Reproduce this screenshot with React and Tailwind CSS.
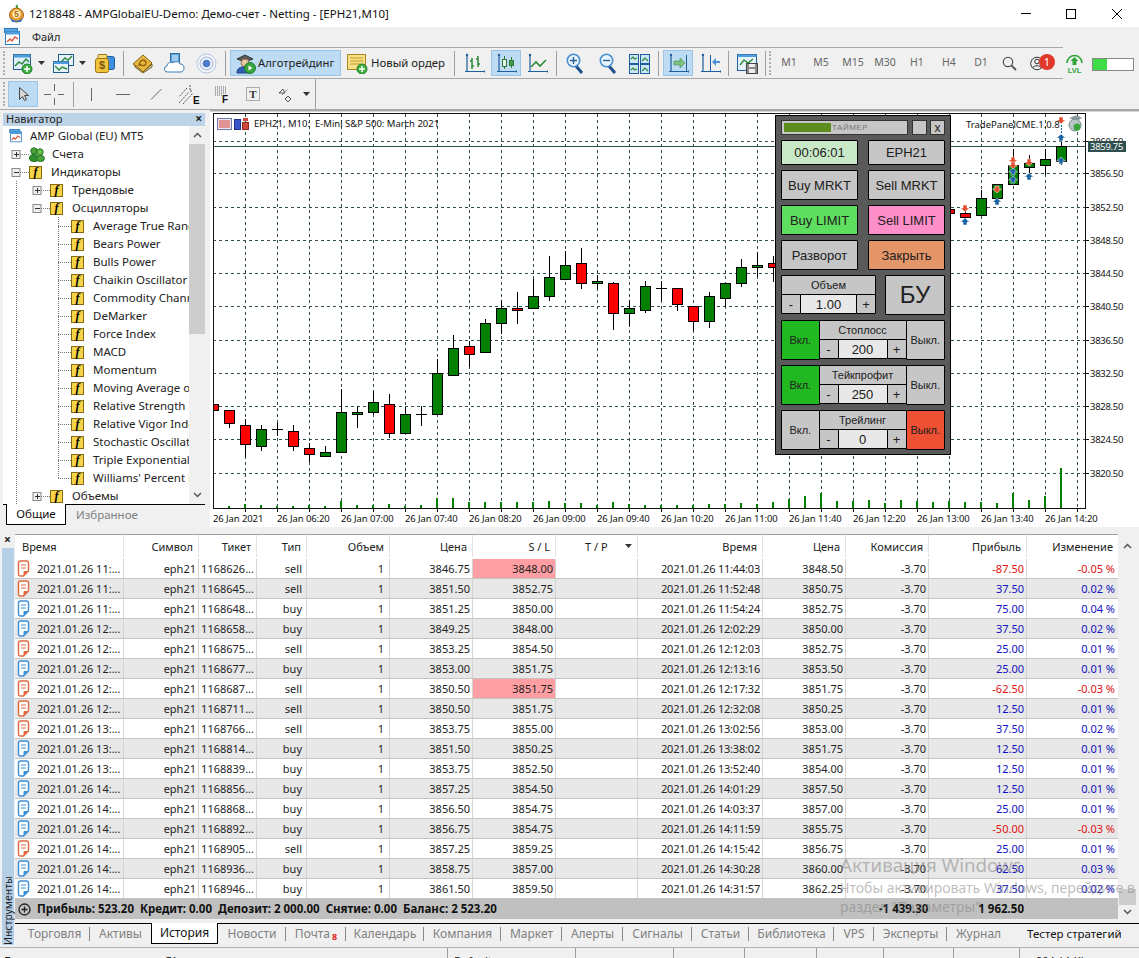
import React from 'react';

const candles = [
  [213, 404, 404, 410, 410, 'r'], [229, 410, 410, 423, 428, 'r'], [245, 419, 425, 444, 457, 'r'], [261, 425, 429, 446, 451, 'g'],
  [277, 423, 429, 429, 436, 'd'], [293, 425, 431, 446, 451, 'r'], [309, 443, 448, 454, 462, 'r'], [325, 446, 452, 456, 457, 'g'],
  [341, 389, 412, 452, 453, 'g'], [357, 406, 412, 414, 428, 'g'], [373, 391, 402, 412, 415, 'g'], [389, 394, 404, 433, 438, 'r'],
  [405, 407, 414, 433, 433, 'g'], [421, 406, 414, 414, 426, 'd'], [437, 359, 373, 414, 414, 'g'], [453, 335, 348, 375, 375, 'g'],
  [469, 341, 346, 354, 367, 'r'], [485, 319, 323, 352, 352, 'g'], [501, 300, 308, 323, 334, 'g'], [517, 292, 308, 310, 324, 'r'],
  [533, 279, 296, 308, 308, 'g'], [549, 256, 277, 296, 301, 'g'], [565, 251, 265, 279, 279, 'g'], [581, 248, 263, 283, 289, 'r'],
  [597, 275, 281, 283, 289, 'g'], [613, 282, 283, 313, 330, 'r'], [629, 300, 308, 313, 326, 'g'], [645, 281, 286, 310, 313, 'g'],
  [661, 281, 288, 288, 301, 'd'], [677, 288, 288, 304, 311, 'r'], [693, 306, 306, 321, 331, 'r'], [709, 292, 296, 321, 328, 'g'],
  [725, 283, 283, 298, 307, 'g'], [741, 259, 267, 283, 287, 'g'], [757, 252, 265, 267, 277, 'g'], [773, 256, 263, 267, 282, 'r'],
  [949, 205, 209, 213, 216, 'r'], [965, 206, 213, 217, 224, 'r'], [981, 190, 198, 215, 216, 'g'], [997, 184, 184, 198, 204, 'g'],
  [1013, 149, 165, 184, 184, 'g'], [1029, 155, 163, 167, 180, 'g'], [1045, 149, 159, 165, 175, 'g'], [1061, 142, 146, 161, 165, 'g'],
];

const volumes = [2, 4, 3, 2, 2, 3, 2, 7, 3, 3, 4, 2, 3, 10, 10, 6, 6, 6, 6, 6, 7, 5, 5, 3, 6, 4, 3, 3, 3, 3, 4, 4, 5, 4, 6, 9, 12, 15, 7, 7, 8, 5, 8, 7, 6, 7, 6, 6, 5, 15, 8, 12, 40];
const hLines = [141, 173, 207, 240, 273, 306, 340, 373, 406, 439, 473];
const prices = ['3860.50', '3856.50', '3852.50', '3848.50', '3844.50', '3840.50', '3836.50', '3832.50', '3828.50', '3824.50', '3820.50'];
const timeLabels = ['26 Jan 2021', '26 Jan 06:20', '26 Jan 07:00', '26 Jan 07:40', '26 Jan 08:20', '26 Jan 09:00', '26 Jan 09:40', '26 Jan 10:20', '26 Jan 11:00', '26 Jan 11:40', '26 Jan 12:20', '26 Jan 13:00', '26 Jan 13:40', '26 Jan 14:20'];

const rows = [
  ['11', '1168626', 'sell', '3846.75', '3848.00', '11:44:03', '3848.50', '-87.50', '-0.05 %', true],
  ['11', '1168645', 'sell', '3851.50', '3852.75', '11:52:48', '3850.75', '37.50', '0.02 %'],
  ['11', '1168648', 'buy', '3851.25', '3850.00', '11:54:24', '3852.75', '75.00', '0.04 %'],
  ['12', '1168658', 'buy', '3849.25', '3848.00', '12:02:29', '3850.00', '37.50', '0.02 %'],
  ['12', '1168675', 'sell', '3853.25', '3854.50', '12:12:03', '3852.75', '25.00', '0.01 %'],
  ['12', '1168677', 'buy', '3853.00', '3851.75', '12:13:16', '3853.50', '25.00', '0.01 %'],
  ['12', '1168687', 'sell', '3850.50', '3851.75', '12:17:32', '3851.75', '-62.50', '-0.03 %', true],
  ['12', '1168711', 'sell', '3850.50', '3851.75', '12:32:08', '3850.25', '12.50', '0.01 %'],
  ['13', '1168766', 'sell', '3853.75', '3855.00', '13:02:56', '3853.00', '37.50', '0.02 %'],
  ['13', '1168814', 'buy', '3851.50', '3850.25', '13:38:02', '3851.75', '12.50', '0.01 %'],
  ['13', '1168839', 'buy', '3853.75', '3852.50', '13:52:40', '3854.00', '12.50', '0.01 %'],
  ['14', '1168856', 'buy', '3857.25', '3854.50', '14:01:29', '3857.50', '12.50', '0.01 %'],
  ['14', '1168868', 'buy', '3856.50', '3854.75', '14:03:37', '3857.00', '25.00', '0.01 %'],
  ['14', '1168892', 'buy', '3856.75', '3854.75', '14:11:59', '3855.75', '-50.00', '-0.03 %'],
  ['14', '1168905', 'sell', '3857.25', '3859.25', '14:15:42', '3856.75', '25.00', '0.01 %'],
  ['14', '1168936', 'buy', '3858.75', '3857.00', '14:30:28', '3860.00', '62.50', '0.03 %'],
  ['14', '1168946', 'buy', '3861.50', '3859.50', '14:31:57', '3862.25', '37.50', '0.02 %'],
];

const tabs = [
  { label: 'Торговля', w: 'w-[75px]' }, { label: 'Активы', w: 'w-[61px]' }, { label: 'История', w: 'w-[67px]', active: true },
  { label: 'Новости', w: 'w-[68px]' }, { label: 'Почта', w: 'w-[60px]', badge: '8' }, { label: 'Календарь', w: 'w-[78px]' },
  { label: 'Компания', w: 'w-[77px]' }, { label: 'Маркет', w: 'w-[61px]' }, { label: 'Алерты', w: 'w-[61px]' },
  { label: 'Сигналы', w: 'w-[69px]' }, { label: 'Статьи', w: 'w-[57px]' }, { label: 'Библиотека', w: 'w-[85px]' },
  { label: 'VPS', w: 'w-[40px]' }, { label: 'Эксперты', w: 'w-[73px]' }, { label: 'Журнал', w: 'w-[63px]', last: true },
];

const indicators = ['Average True Range', 'Bears Power', 'Bulls Power', 'Chaikin Oscillator', 'Commodity Channel', 'DeMarker', 'Force Index', 'MACD', 'Momentum', 'Moving Average of', 'Relative Strength Index', 'Relative Vigor Index', 'Stochastic Oscillator', 'Triple Exponential', "Williams' Percent Range"];

const tableCols = 'grid grid-cols-[109px_75px_58px_50px_83px_83px_83px_82px_125px_83px_83px_98px_91px]';

function Caret() {
  return (
    <svg width="7" height="4" viewBox="0 0 7 4" className="shrink-0">
      <path d="M0 0h7L3.5 4z" fill="#333" />
    </svg>
  );
}

function PlusBadge({ x = 13, y = 13 }) {
  return (
    <g>
      <circle cx={x} cy={y} r="5" fill="#3fae3f" stroke="#1f7f2f" />
      <path d={`M${x - 3} ${y}h6M${x} ${y - 3}v6`} stroke="#fff" strokeWidth="1.5" />
    </g>
  );
}

function Ico({ w = 21, h = 21, vb, className, children }) {
  return (
    <svg width={w} height={h} viewBox={vb || `0 0 ${w} ${h}`} className={`shrink-0 ${className || ''}`}>
      {children}
    </svg>
  );
}

function WinIcon({ w = 16, h = 18 }) {
  return (
    <Ico w={w} h={h} vb="0 0 16 18">
      <rect x="0.5" y="0.5" width="13" height="4" fill="#58a6e0" stroke="#2c7cc0" />
      <rect x="1.5" y="3.5" width="14" height="13" fill="#fff" stroke="#2c7cc0" />
      <rect x="1.5" y="3.5" width="14" height="3" fill="#4f9ddc" />
      <path d="M3 14l3-3 2 2 3-4 3 2" fill="none" stroke="#e0503c" strokeWidth="1.3" />
    </Ico>
  );
}

function Logo() {
  return (
    <Ico w={17} h={19}>
      <path d="M8.5 1c1 2 1 3 0 5" stroke="#2f9a3a" strokeWidth="2" fill="none" />
      <circle cx="8.5" cy="11" r="7" fill="#e89a2a" stroke="#a5681a" />
      <path d="M2 13c3 5 10 5 13 0l-2 5H4z" fill="#2f6fc0" />
      <circle cx="8.5" cy="10" r="4.2" fill="#fff3c0" />
      <text x="8.5" y="13" fontSize="9" fontWeight="700" textAnchor="middle" fill="#b56a10" fontFamily="Liberation Sans">5</text>
    </Ico>
  );
}

function NewChart() {
  return (
    <Ico>
      <rect x="1.5" y="1.5" width="17" height="15" fill="#dff0fb" stroke="#1d5e8c" />
      <rect x="1.5" y="1.5" width="17" height="3" fill="#4f9ddc" />
      <path d="M3 13l4-4 3 2 4-5 3 3" fill="none" stroke="#2f8a3a" strokeWidth="1.5" />
      <PlusBadge x={15} y={16} />
    </Ico>
  );
}

function Windows2() {
  return (
    <Ico>
      <rect x="5.5" y="1.5" width="15" height="11" fill="#e6f3fb" stroke="#1d5e8c" />
      <path d="M8 9l4-4 3 2 4-4" fill="none" stroke="#2f8a3a" strokeWidth="1.4" />
      <rect x="0.5" y="8.5" width="15" height="11" fill="#e6f3fb" stroke="#1d5e8c" />
      <rect x="0.5" y="8.5" width="15" height="2.5" fill="#4f9ddc" />
      <path d="M2 13l4 4 3-3 5 2" fill="none" stroke="#2f8a3a" strokeWidth="1.4" />
    </Ico>
  );
}

function Dollar() {
  return (
    <Ico>
      <rect x="10.5" y="3.5" width="10" height="13" rx="2" fill="#3f8fe0" stroke="#1d5e9c" />
      <rect x="1.5" y="5.5" width="13" height="14" rx="2" fill="#f2c43c" stroke="#9c7410" />
      <rect x="4" y="1.5" width="9" height="4" rx="1" fill="#f7dc7c" stroke="#9c7410" />
      <text x="8" y="16" fontSize="11" fontWeight="700" textAnchor="middle" fill="#7a5a10" fontFamily="Liberation Sans">$</text>
    </Ico>
  );
}

function Book() {
  return (
    <Ico>
      <path d="M1 11L11 2l9 8-9 9z" fill="#e8b83c" stroke="#80601a" />
      <path d="M3 12l8 7 9-8v3l-9 6-8-6z" fill="#c9c9b0" stroke="#80601a" />
      <path d="M8 9c2-3 6-2 6 1s-3 3-5 2M8 9l-1 3 3 0" fill="none" stroke="#8a5a10" strokeWidth="1.3" />
    </Ico>
  );
}

function CloudUser() {
  return (
    <Ico>
      <rect x="6.5" y="0.5" width="9" height="12" fill="#5aa5e0" stroke="#2c6ca0" />
      <path d="M8 3h6M8 5h6M8 7h6" stroke="#e8f4ff" />
      <path d="M4 19a3 3 0 0 1-1-6c0-3 4-5 6-3 2-2 6-2 7 1 3 0 4 2 4 4s-1 4-3 4z" fill="#fff" stroke="#3b7cb8" />
    </Ico>
  );
}

function Signal() {
  return (
    <Ico>
      <circle cx="10.5" cy="10.5" r="9.5" fill="#f4f6fb" stroke="#b4c4e0" />
      <circle cx="10.5" cy="10.5" r="6.5" fill="#e6ecf8" stroke="#a0b4da" />
      <circle cx="10.5" cy="10.5" r="3.2" fill="#4f7fd0" stroke="#3a64b0" />
    </Ico>
  );
}

function Algo() {
  return (
    <Ico>
      <path d="M2 6l8-4 8 4-8 3z" fill="#5a5a5a" stroke="#333" />
      <circle cx="10" cy="10" r="4" fill="#e8c8a0" stroke="#907050" />
      <path d="M2 20c0-5 3-6 8-6s6 1 6 6z" fill="#2f5fb0" stroke="#1f4080" />
      <circle cx="15" cy="15" r="5.5" fill="#3aa53a" stroke="#1f7f2f" />
      <path d="M13.5 12.5v5l4-2.5z" fill="#fff" />
    </Ico>
  );
}

function NewOrder() {
  return (
    <Ico>
      <rect x="0.5" y="1.5" width="18" height="15" fill="#f7e08a" stroke="#a8861c" />
      <path d="M3 5h13M3 8h13M3 11h10" stroke="#c49a20" />
      <PlusBadge x={15} y={16} />
    </Ico>
  );
}

function Axes({ children, w = 21, h = 21 }) {
  return (
    <Ico w={w} h={h}>
      <path d="M3 1v18M1 18.5h19" stroke="#1d5e9c" strokeWidth="1.2" fill="none" />
      <circle cx="3" cy="2" r="1.2" fill="#1d5e9c" />
      <path d="M20 17l0 3 1.5-1.5z" fill="#1d5e9c" />
      {children}
    </Ico>
  );
}

function Magnifier({ minus }) {
  return (
    <Ico w={18} h={21}>
      <path d="M10 13l6 7" stroke="#1d4e8c" strokeWidth="3" />
      <circle cx="7.5" cy="7.5" r="6.2" fill="#eaf4fc" stroke="#4a90d0" strokeWidth="1.6" />
      <path d={minus ? 'M4 7.5h7' : 'M4 7.5h7M7.5 4v7'} stroke="#2c5e8c" strokeWidth="1.4" />
    </Ico>
  );
}

function GridIcon() {
  return (
    <Ico>
      <rect x="0.5" y="1.5" width="9" height="9" fill="#cfe6f6" stroke="#1d5e9c" />
      <rect x="11.5" y="1.5" width="9" height="9" fill="#cfe6f6" stroke="#1d5e9c" />
      <rect x="0.5" y="11.5" width="9" height="9" fill="#cfe6f6" stroke="#1d5e9c" />
      <rect x="11.5" y="11.5" width="9" height="9" fill="#cfe6f6" stroke="#1d5e9c" />
      <path d="M2 6l2-2 2 2 2-1M13 8l3-3 3 3M2 17l2-2 2 2 2-1M13 18l3-3 3 3" fill="none" stroke="#2f8a3a" strokeWidth="1.2" />
    </Ico>
  );
}

function Template() {
  return (
    <Ico>
      <rect x="0.5" y="1.5" width="19" height="16" fill="#e6f3fb" stroke="#1d5e9c" />
      <rect x="0.5" y="1.5" width="19" height="2.5" fill="#4f9ddc" />
      <path d="M3 12l4-5 4 3 5-4" fill="none" stroke="#2f8a3a" strokeWidth="1.4" />
      <rect x="9.5" y="10.5" width="11" height="10" fill="#8a8a8a" stroke="#444" />
      <rect x="12" y="11" width="6" height="3" fill="#eee" />
      <rect x="12" y="16" width="6" height="4" fill="#eee" />
    </Ico>
  );
}

function Lvl() {
  return (
    <Ico w={19} h={21}>
      <path d="M2 10a7.5 7.5 0 0 1 15 0" fill="none" stroke="#2fa53a" strokeWidth="1.6" />
      <path d="M9.5 4l4 4h-2v4h-4V8h-2z" fill="#2fa53a" />
      <text x="9.5" y="20" fontSize="7.5" textAnchor="middle" fill="#2fa53a" fontFamily="Liberation Sans" fontWeight="700">LVL</text>
    </Ico>
  );
}

function FIcon() {
  return (
    <span className="w-[13px] h-[13px] shrink-0 border border-[#8a6a10] bg-[#f6d44a] flex items-center justify-center font-['Liberation_Serif'] italic font-bold text-[12px] leading-none text-black">f</span>
  );
}

function Accounts() {
  return (
    <Ico w={16} h={15}>
      <circle cx="5" cy="4" r="3.2" fill="#4aa53a" stroke="#1f6f1f" />
      <circle cx="11" cy="5" r="3.2" fill="#6ac04a" stroke="#1f6f1f" />
      <ellipse cx="5" cy="11" rx="4.5" ry="3.5" fill="#2f8f2f" stroke="#1f6f1f" />
      <ellipse cx="11.5" cy="11.5" rx="4" ry="3" fill="#4aa53a" stroke="#1f6f1f" />
    </Ico>
  );
}

function DocIcon({ sell }) {
  const c = sell ? '#e0693c' : '#3b8fd8';
  return (
    <Ico w={13} h={17} className="ml-[2px]">
      <path d="M1.5 3q0-2 2-2h6q2 0 2 2v8l-5 5h-3q-2 0-2-2z" fill="#fff" stroke={c} strokeWidth="1.4" />
      <path d="M11.5 11h-4q-1 0-1 1v4z" fill={c} />
      <path d="M4 5h5M4 8h5" stroke={c} strokeWidth="1.2" />
    </Ico>
  );
}

function TreeLines({ w, guides = [], box, branch, last }) {
  // dotted tree connectors of one navigator row
  return (
    <svg width={w} height="18" className="shrink-0">
      {guides.map((g) => (
        <path key={g} d={`M${g + 0.5} 0v18`} stroke="#777" strokeDasharray="1 1" />
      ))}
      {branch !== undefined && (
        <path d={`M${branch + 0.5} 0v${last ? 9 : 18}M${branch} 9.5h${w - branch}`} stroke="#777" strokeDasharray="1 1" />
      )}
      {box !== undefined && (
        <g>
          <path d={`M${box + 4} 9.5H${w}`} stroke="#777" strokeDasharray="1 1" />
          <rect x={box - 4} y="5.5" width="8" height="8" fill="#f0f0f0" stroke="#8a8a8a" />
          <path d={`M${box - 2} 9.5h5`} stroke="#333" />
        </g>
      )}
    </svg>
  );
}

function PlusLines({ w, guides, box }) {
  return (
    <svg width={w} height="18" className="shrink-0">
      {guides.map((g) => (
        <path key={g} d={`M${g + 0.5} 0v18`} stroke="#777" strokeDasharray="1 1" />
      ))}
      <path d={`M${box + 4} 9.5H${w}`} stroke="#777" strokeDasharray="1 1" />
      <rect x={box - 4} y="5.5" width="8" height="8" fill="#f0f0f0" stroke="#8a8a8a" />
      <path d={`M${box - 2} 9.5h5M${box + 0.5} 7v5`} stroke="#333" />
    </svg>
  );
}

function Navigator() {
  return (
    <div className="w-[210px] shrink-0 flex flex-col pl-[3px] pt-[3px] pr-[5px] pb-[2px] bg-[#f0f0f0]">
      <div className="h-[13px] bg-[#bcd3e8] flex items-start justify-between pl-[3px] pr-[3px] text-[11px] leading-[11px] text-[#222]">
        <span>Навигатор</span>
        <span className="font-bold text-[12px]">×</span>
      </div>
      <div className="relative bg-white flex-1 min-h-0 flex overflow-hidden">
        <div className="w-[186px] shrink-0 overflow-hidden text-[11.5px] text-[#222] whitespace-nowrap pl-[3px] pt-[1px]">
          <div className="h-[18px] flex items-center">
            <span className="ml-[2px]"><WinIcon w={15} h={14} /></span>
            <span className="ml-[7px]">AMP Global (EU) MT5</span>
          </div>
          <div className="h-[18px] flex items-center">
            <PlusLines w={23} guides={[]} box={10} />
            <Accounts />
            <span className="ml-[7px]">Счета</span>
          </div>
          <div className="h-[18px] flex items-center">
            <TreeLines w={23} box={10} />
            <FIcon />
            <span className="ml-[9px]">Индикаторы</span>
          </div>
          <div className="h-[18px] flex items-center">
            <PlusLines w={44} guides={[10]} box={31} />
            <FIcon />
            <span className="ml-[9px]">Трендовые</span>
          </div>
          <div className="h-[18px] flex items-center">
            <TreeLines w={44} guides={[10]} box={31} />
            <FIcon />
            <span className="ml-[9px]">Осцилляторы</span>
          </div>
          {indicators.map((name, i) => (
            <div key={name} className="h-[18px] flex items-center">
              <TreeLines w={65} guides={[10]} branch={52} last={i === indicators.length - 1} />
              <FIcon />
              <span className="ml-[9px]">{name}</span>
            </div>
          ))}
          <div className="h-[18px] flex items-center">
            <PlusLines w={44} guides={[10]} box={31} />
            <FIcon />
            <span className="ml-[9px]">Объемы</span>
          </div>
        </div>
        <div className="w-[16px] shrink-0 flex flex-col bg-[#f0f0f0]">
          <div className="h-[18px] flex items-center justify-center text-[#555]">
            <svg width="9" height="6"><path d="M1 5l3.5-3.5L8 5" fill="none" stroke="#555" strokeWidth="1.5" /></svg>
          </div>
          <div className="h-[190px] bg-[#cdcdcd]" />
          <div className="flex-1" />
          <div className="h-[18px] flex items-center justify-center">
            <svg width="9" height="6"><path d="M1 1l3.5 3.5L8 1" fill="none" stroke="#555" strokeWidth="1.5" /></svg>
          </div>
        </div>
      </div>
      <div className="h-[24px] shrink-0 border-t border-black flex text-[11.5px] leading-none">
        <div className="w-[60px] ml-[3px] -mt-px h-[21px] bg-white border-l border-r border-b border-black flex items-center justify-center text-[#111]">Общие</div>
        <div className="ml-[10px] h-[19px] flex items-center text-[#808080]">Избранное</div>
      </div>
    </div>
  );
}

function Arrow({ x, y, red, down }) {
  const c = red ? '#e0502c' : '#1a64a4';
  const p = down
    ? `M${x - 2} ${y - 4}h4v3h2.5L${x} ${y + 3}l-4.5-4H${x - 2}z`
    : `M${x} ${y - 3}l4.5 4H${x + 2}v3h-4v-3h-2.5z`;
  return <path d={p} fill={c} stroke="#fff" strokeWidth="0.5" />;
}

function Chart() {
  const vGrid = [];
  for (let x = 245; x < 1085; x += 32) vGrid.push(x);
  return (
    <svg width="929" height="420" viewBox="210 110 929 420" className="block absolute inset-0" fontFamily="Noto Sans, sans-serif">
      <rect x="210" y="110" width="929" height="420" fill="#fff" />
      <rect x="210" y="110" width="929" height="1.5" fill="#a8a8a8" />
      <rect x="210" y="527" width="929" height="3" fill="#f0f0f0" />
      {hLines.map((y) => (
        <path key={y} d={`M213 ${y + 0.5}H1085`} stroke="#2f4f4f" strokeDasharray="3 3" shapeRendering="crispEdges" />
      ))}
      {vGrid.map((x) => (
        <path key={x} d={`M${x + 0.5} 114V508`} stroke="#2f4f4f" strokeDasharray="3 3" shapeRendering="crispEdges" />
      ))}
      <path d="M213.5 113.5H1085.5V508.5H213.5z" fill="none" stroke="#111" shapeRendering="crispEdges" />
      <path d="M213 146.5H1085" stroke="#2f4f4f" shapeRendering="crispEdges" />
      {volumes.map((h, i) => (
        <rect key={i} x={228 + i * 16} y={508 - h} width="2" height={h} fill="#007f00" />
      ))}
      <svg x="214" y="114" width="871" height="394" viewBox="214 114 871 394">
        {candles.map(([x, wt, bt, bb, wb, t]) => (
          <g key={x} shapeRendering="crispEdges">
            <path d={`M${x + 0.5} ${wt}V${wb}`} stroke="#000" />
            {t === 'd' ? (
              <path d={`M${x - 5} ${bt + 0.5}h11`} stroke="#000" />
            ) : (
              <rect x={x - 4.5} y={bt + 0.5} width="10" height={Math.max(bb - bt, 1)} fill={t === 'g' ? '#008000' : '#ff0000'} stroke="#000" />
            )}
          </g>
        ))}
        <Arrow x={965} y={209} red down />
        <Arrow x={965} y={221} />
        <Arrow x={997} y={190} red down />
        <Arrow x={997} y={201} />
        <Arrow x={1013} y={161} red down />
        <Arrow x={1013} y={166} red down />
        <Arrow x={1013} y={171} />
        <Arrow x={1013} y={179} />
        <Arrow x={1029} y={163} red down />
        <Arrow x={1029} y={176} />
        <Arrow x={1061} y={121} red down />
        <Arrow x={1061} y={137} />
        <Arrow x={1061} y={160} />
        <path d="M1061.5 125V133" stroke="#1a64a4" strokeDasharray="2 1" />
      </svg>
      {/* left corner icons */}
      <rect x="217.5" y="118.5" width="14" height="11" fill="#f2e6e6" stroke="#6a7ab0" />
      <path d="M219 121h11M219 123h11M219 125h11M219 127h11" stroke="#d04040" />
      <rect x="234.5" y="119.5" width="6" height="10" fill="#3a52c8" stroke="#24308a" />
      <rect x="242.5" y="122.5" width="6" height="7" fill="#d04838" stroke="#8a2a20" />
      <path d="M243 118h5v3h-5z" fill="#d04838" />
      <text x="254" y="127" fontSize="9.5" fill="#111">{'EPH21, M10:\u00a0\u00a0E-Mini S&P 500: March 2021'}</text>
      <text x="966" y="128" fontSize="9.5" fill="#111">TradePanelCME.1.0.8</text>
      {/* expert advisor hat */}
      <path d="M1069 118l8-3 5 3-5 3z" fill="#8a9aa0" />
      <circle cx="1075" cy="125" r="6" fill="#b8c4c8" stroke="#788" />
      <circle cx="1077" cy="127" r="3.5" fill="#3aa53a" />
      {/* price scale */}
      {hLines.map((y, i) => (
        <g key={y}>
          <path d={`M1085 ${y + 0.5}h4`} stroke="#111" shapeRendering="crispEdges" />
          <text x="1090" y={y + 4} fontSize="9.5" letterSpacing="-0.3" fill="#111">{prices[i]}</text>
        </g>
      ))}
      <rect x="1088" y="141" width="38" height="11" fill="#2f4f4f" />
      <text x="1090" y="150" fontSize="9.5" letterSpacing="-0.3" fill="#fff">3859.75</text>
      {/* time scale */}
      {vGrid.map((x) => (
        <path key={x} d={`M${x + 0.5} 508v4`} stroke="#111" shapeRendering="crispEdges" />
      ))}
      {timeLabels.map((t, i) => (
        <text key={t} x={i === 0 ? 213 : 213 + i * 64} y="522" fontSize="9.5" letterSpacing="-0.1" fill="#111">{t}</text>
      ))}
    </svg>
  );
}

const btn = 'border border-black rounded-[1px] flex items-center justify-center text-[#202020]';

function Stepper({ label, value, valueW, stepW, w }) {
  return (
    <div className={`${w} flex flex-col shrink-0`}>
      <div className={`${btn} h-[20px] bg-[#c6c6c6] text-[11px]`}>{label}</div>
      <div className="flex h-[20px] -mt-px">
        <div className={`${btn} ${stepW} bg-[#c6c6c6] text-[13px]`}>-</div>
        <div className={`${btn} ${valueW} -ml-px bg-[#e8e8e8] text-[13px]`}>{value}</div>
        <div className={`${btn} ${stepW} -ml-px bg-[#c6c6c6] text-[13px]`}>+</div>
      </div>
    </div>
  );
}

function ToggleRow({ label, value, onLeft, offRed }) {
  return (
    <div className="flex h-[40px]">
      <div className={`${btn} w-[39px] text-[11px] ${onLeft ? 'bg-[#22b822]' : 'bg-[#c6c6c6]'}`}>Вкл.</div>
      <div className="-ml-px">
        <Stepper label={label} value={value} w="w-[88px]" stepW="w-[20px]" valueW="w-[50px]" />
      </div>
      <div className={`${btn} w-[40px] -ml-px text-[11px] ${offRed ? 'bg-[#ee5033]' : 'bg-[#c6c6c6]'}`}>Выкл.</div>
    </div>
  );
}

function TradePanel() {
  return (
    <div className="absolute left-[565px] top-[5px] w-[176px] h-[340px] bg-[#5a5a5a] border border-black px-[5px] pt-[4px] flex flex-col font-['Liberation_Sans'] text-[13px] leading-none">
      <div className="flex h-[15px]">
        <div className="w-[127px] border border-[#333] bg-[#c6c6c6] p-[2px] flex items-center overflow-hidden">
          <div className="w-[47px] h-full bg-[#5b8c1c] shrink-0" />
          <span className="text-[8px] text-[#777] ml-[1px] tracking-[0.5px]">ТАЙМЕР</span>
        </div>
        <div className="w-[15px] ml-[4px] border border-[#333] bg-[#c6c6c6]" />
        <div className="w-[15px] ml-[3px] border border-[#333] bg-[#c6c6c6] flex items-center justify-center text-[12px] text-[#222]">x</div>
      </div>
      <div className="flex justify-between h-[25px] mt-[5px]">
        <div className={`${btn} w-[77px] bg-[#c8e8c8]`}>00:06:01</div>
        <div className={`${btn} w-[77px] bg-[#c6c6c6]`}>EPH21</div>
      </div>
      <div className="flex justify-between h-[30px] mt-[5px]">
        <div className={`${btn} w-[77px] bg-[#c6c6c6]`}>Buy MRKT</div>
        <div className={`${btn} w-[77px] bg-[#c6c6c6]`}>Sell MRKT</div>
      </div>
      <div className="flex justify-between h-[30px] mt-[5px]">
        <div className={`${btn} w-[77px] bg-[#5fdf5f]`}>Buy LIMIT</div>
        <div className={`${btn} w-[77px] bg-[#ff8fc8]`}>Sell LIMIT</div>
      </div>
      <div className="flex justify-between h-[30px] mt-[5px]">
        <div className={`${btn} w-[77px] bg-[#c6c6c6]`}>Разворот</div>
        <div className={`${btn} w-[77px] bg-[#e59668]`}>Закрыть</div>
      </div>
      <div className="flex justify-between h-[40px] mt-[5px]">
        <Stepper label="Объем" value="1.00" w="w-[95px]" stepW="w-[20px]" valueW="w-[57px]" />
        <div className={`${btn} w-[60px] bg-[#c6c6c6] text-[24px]`}>БУ</div>
      </div>
      <div className="flex flex-col gap-[5px] mt-[5px]">
        <ToggleRow label="Стоплосс" value="200" onLeft />
        <ToggleRow label="Тейкпрофит" value="250" onLeft />
        <ToggleRow label="Трейлинг" value="0" offRed />
      </div>
    </div>
  );
}

function HeaderCell({ children, left, className }) {
  return (
    <div className={`h-full flex items-center border-r border-[#e4e4e4] ${left ? 'justify-start pl-[7px]' : 'justify-end pr-[5px]'} ${className || ''}`}>
      {children}
    </div>
  );
}

function Cell({ children, className }) {
  return (
    <div className={`h-full flex items-center justify-end pr-[2px] border-r border-[#d4d4d4] overflow-hidden whitespace-nowrap ${className || ''}`}>
      {children}
    </div>
  );
}

function TradeTable() {
  const headers = ['Символ', 'Тикет', 'Тип', 'Объем', 'Цена', 'S / L'];
  return (
    <div className="flex flex-col text-[11px] leading-none text-[#222]">
      <div className={`${tableCols} h-[25px] bg-white border-t border-[#a0a0a0] pb-[2px]`}>
        <HeaderCell left>Время</HeaderCell>
        {headers.map((h) => (
          <HeaderCell key={h}>{h}</HeaderCell>
        ))}
        <div className="h-full flex items-center pl-[29px] border-r border-[#e4e4e4] gap-[17px]">
          <span>T / P</span>
          <Caret />
        </div>
        <HeaderCell>Время</HeaderCell>
        <HeaderCell>Цена</HeaderCell>
        <HeaderCell>Комиссия</HeaderCell>
        <HeaderCell>Прибыль</HeaderCell>
        <div className="h-full flex items-center justify-end pr-[5px]">Изменение</div>
      </div>
      {rows.map((r, i) => {
        const tone = r[7].startsWith('-') ? 'text-[#e01010]' : 'text-[#1010c0]';
        return (
          <div key={r[1]} className={`${tableCols} h-[20px] border-b border-[#c4c4c4] ${i % 2 ? 'bg-[#e8e8e8]' : 'bg-white'}`}>
            <div className="h-full flex items-center border-r border-[#d4d4d4] overflow-hidden whitespace-nowrap">
              <DocIcon sell={r[2] === 'sell'} />
              <span className="ml-[7px]">2021.01.26 {r[0]}:...</span>
            </div>
            <Cell>eph21</Cell>
            <Cell>{r[1]}...</Cell>
            <Cell className="pr-[4px]">{r[2]}</Cell>
            <Cell className="pr-[5px]">1</Cell>
            <Cell>{r[3]}</Cell>
            <Cell className={r[9] ? 'bg-[#ff9fa3]' : ''}>{r[4]}</Cell>
            <Cell />
            <Cell className="tracking-[-0.2px]">2021.01.26 {r[5]}</Cell>
            <Cell>{r[6]}</Cell>
            <Cell>-3.70</Cell>
            <Cell className={tone}>{r[7]}</Cell>
            <div className={`h-full flex items-center justify-end pr-[3px] ${tone}`}>{r[8]}</div>
          </div>
        );
      })}
    </div>
  );
}

function BottomTabs() {
  return (
    <div className="flex h-[22px] mt-[4px] border-t border-black text-[12px] leading-none text-[#808080] pr-[17px] w-[1124px]">
      {tabs.map((t) => (
        <div
          key={t.label}
          className={t.active
            ? `${t.w} h-[21px] -mt-px bg-white border-l border-r border-b border-black border-t-0 flex items-center justify-center text-[#111] shrink-0`
            : `${t.w} h-[19px] flex items-center justify-center shrink-0 relative`}
        >
          <span className={t.label === 'Торговля' ? 'ml-[4px]' : ''}>{t.label}</span>
          {t.badge && <span className="text-[9px] font-bold text-[#e02020] ml-[2px] mt-[6px]">{t.badge}</span>}
          {!t.active && !t.last && t.label !== 'Активы' && <span className="absolute right-0 top-[3px] h-[14px] w-px bg-[#8a8a8a]" />}
        </div>
      ))}
      <div className="ml-[17px] h-[19px] flex items-center text-[11.5px] text-[#111] whitespace-nowrap">Тестер стратегий</div>
    </div>
  );
}

function Sep({ className }) {
  return <div className={`w-px h-[25px] bg-[#a0a0a0] shrink-0 ${className || ''}`} />;
}

function Grip({ className }) {
  return <div className={`w-[2px] h-[24px] shrink-0 border-l-2 border-dotted border-[#b0b0b0] ${className || ''}`} />;
}

function TimeFrame({ label }) {
  return <div className="w-[32px] text-center text-[10.5px] text-[#666]">{label}</div>;
}

function Toolbar1() {
  return (
    <div className="h-[32px] flex items-center w-[1063px] border-t border-b border-[#a8a8a8] pl-[3px]">
      <Grip />
      <div className="ml-[7px]"><NewChart /></div>
      <div className="ml-[5px]"><Caret /></div>
      <div className="ml-[8px]"><Windows2 /></div>
      <div className="ml-[5px]"><Caret /></div>
      <div className="ml-[8px]"><Dollar /></div>
      <Sep className="ml-[8px]" />
      <div className="ml-[8px]"><Book /></div>
      <div className="ml-[11px]"><CloudUser /></div>
      <div className="ml-[11px]"><Signal /></div>
      <Sep className="ml-[8px]" />
      <div className="ml-[4px] w-[111px] shrink-0 h-[26px] bg-[#bddcf4] border border-[#9cc4e4] flex items-center pl-[4px] text-[11.3px] text-[#222]">
        <Algo />
        <span className="ml-[2px] whitespace-nowrap">Алготрейдинг</span>
      </div>
      <div className="ml-[6px]"><NewOrder /></div>
      <span className="ml-[3px] text-[11.4px] text-[#222] whitespace-nowrap w-[83px] shrink-0">Новый ордер</span>
      <Sep />
      <div className="ml-[9px]">
        <Axes>
          <path d="M8 5v11M14 3v11" stroke="#2f8a3a" strokeWidth="1.5" />
          <path d="M6 8h2M8 13h2M12 6h2M14 11h2" stroke="#2f8a3a" strokeWidth="1.5" />
        </Axes>
      </div>
      <div className="ml-[6px] w-[30px] h-[26px] shrink-0 bg-[#bddcf4] border border-[#9cc4e4] flex items-center justify-center">
        <Axes>
          <path d="M8.5 3v13M15.5 4v11" stroke="#2f7a3a" />
          <rect x="6.5" y="6.5" width="4" height="7" fill="#eaf6ea" stroke="#2f7a3a" />
          <rect x="13.5" y="7.5" width="4" height="5" fill="#3f9f4a" stroke="#2f7a3a" />
        </Axes>
      </div>
      <div className="ml-[6px]">
        <Axes>
          <path d="M4 14l5-5 4 4 6-6" fill="none" stroke="#2f8a3a" strokeWidth="1.6" />
        </Axes>
      </div>
      <Sep className="ml-[8px]" />
      <div className="ml-[9px]"><Magnifier /></div>
      <div className="ml-[15px]"><Magnifier minus /></div>
      <div className="ml-[12px]"><GridIcon /></div>
      <Sep className="ml-[8px]" />
      <div className="ml-[4px] w-[30px] h-[26px] shrink-0 bg-[#bddcf4] border border-[#9cc4e4] flex items-center justify-center">
        <Axes>
          <path d="M18.5 2v16" stroke="#1d5e9c" />
          <path d="M6 8h6V5l5 5-5 5v-3H6z" fill="#7ec07e" stroke="#3f8f4f" strokeWidth="0.6" />
        </Axes>
      </div>
      <div className="ml-[7px]">
        <Axes>
          <path d="M10.5 2v16" stroke="#1d5e9c" />
          <path d="M20 8h-4V5l-4 4 4 4v-3h4z" fill="#4a90d0" />
        </Axes>
      </div>
      <Sep className="ml-[7px]" />
      <div className="ml-[8px]"><Template /></div>
      <Sep className="ml-[7px]" />
      <Grip className="ml-[3px]" />
      <div className="flex ml-[2px]">
        {['M1', 'M5', 'M15', 'M30', 'H1', 'H4', 'D1'].map((m) => (
          <TimeFrame key={m} label={m} />
        ))}
      </div>
      <div className="ml-[5px]">
        <Ico w={15} h={15}>
          <circle cx="6" cy="6" r="4.7" fill="none" stroke="#555" strokeWidth="1.3" />
          <path d="M9.5 9.5L14 14" stroke="#555" strokeWidth="1.8" />
        </Ico>
      </div>
      <div className="ml-[13px] relative w-[14px] h-[15px] shrink-0">
        <Ico w={14} h={15}>
          <circle cx="7" cy="7.5" r="6.3" fill="none" stroke="#333" />
          <circle cx="7" cy="5.5" r="2.3" fill="none" stroke="#333" />
          <path d="M2.5 12c1-3 8-3 9 0" fill="none" stroke="#333" />
        </Ico>
        <span className="absolute left-[9px] -top-[2px] w-[16px] h-[16px] rounded-full bg-[#e0382a] text-white text-[11px] leading-none flex items-center justify-center">1</span>
      </div>
      <div className="ml-[21px] shrink-0 -mr-[30px]"><Lvl /></div>
    </div>
  );
}

function Toolbar2() {
  return (
    <div className="h-[31px] flex items-center border-b border-[#a8a8a8] pl-[3px]">
      <Grip />
      <div className="ml-[3px] w-[30px] h-[26px] bg-[#bddcf4] border border-[#9cc4e4] flex items-center justify-center">
        <Ico w={12} h={16}>
          <path d="M2.5 1.5v12l3-3 2 4 2-1-2-4h4z" fill="#d8d8d8" stroke="#444" />
        </Ico>
      </div>
      <div className="ml-[6px]">
        <Ico w={20} h={21}>
          <path d="M10.5 0v7M10.5 14v7M0 10.5h7M14 10.5h6" stroke="#666" />
        </Ico>
      </div>
      <Sep className="ml-[9px]" />
      <div className="ml-[17px] w-px h-[13px] bg-[#666]" />
      <div className="ml-[24px] w-[14px] h-px bg-[#666]" />
      <div className="ml-[20px]">
        <Ico w={12} h={12}><path d="M1 11.5L11.5 1" stroke="#666" /></Ico>
      </div>
      <div className="ml-[16px]">
        <Ico w={22} h={21}>
          <path d="M1 19l10-11M5 20L15 9M9 4l-8 9M12 1v6l3 0" fill="none" stroke="#555" strokeDasharray="2 1" />
          <text x="15" y="20" fontSize="10" fontWeight="700" fill="#111" fontFamily="Liberation Sans">E</text>
        </Ico>
      </div>
      <div className="ml-[14px]">
        <Ico w={15} h={19}>
          <path d="M1 2h12M1 4h12M1 6h12M1 8h12M1 10h7" stroke="#666" strokeDasharray="1 1" />
          <text x="8" y="18" fontSize="10" fontWeight="700" fill="#111" fontFamily="Liberation Sans">F</text>
        </Ico>
      </div>
      <div className="ml-[17px]">
        <Ico w={15} h={16}>
          <rect x="0.5" y="1.5" width="13" height="13" fill="none" stroke="#666" strokeDasharray="1 1" />
          <text x="7" y="12" fontSize="11" textAnchor="middle" fontWeight="700" fill="#333" fontFamily="Liberation Serif">T</text>
        </Ico>
      </div>
      <div className="ml-[17px]">
        <Ico w={15} h={17}>
          <path d="M1 7l4-4 2 4zM7 13l3-3 3 3-3 3z" fill="none" stroke="#555" />
          <path d="M4 9l6-6" stroke="#555" strokeDasharray="1 1" />
        </Ico>
      </div>
      <div className="ml-[10px]"><Caret /></div>
      <Sep className="ml-[5px] !h-[30px]" />
    </div>
  );
}

export default function App() {
  return (
    <div className="relative w-[1139px] h-[958px] overflow-hidden bg-[#f0f0f0] font-['Noto_Sans',sans-serif] flex flex-col">
      {/* title bar */}
      <div className="h-[27px] bg-white flex items-center shrink-0 pl-[8px] text-[11.5px] text-[#111]">
        <Logo />
        <span className="ml-[4px] whitespace-nowrap">1218848 - AMPGlobalEU-Demo: Демо-счет - Netting - [EPH21,M10]</span>
        <div className="ml-auto flex items-center pr-[17px]">
          <div className="w-[10px] h-px bg-black" />
          <div className="w-[10px] h-[10px] border border-black ml-[35px]" />
          <svg width="10" height="10" className="ml-[36px]"><path d="M0 0l10 10M10 0L0 10" stroke="#000" /></svg>
        </div>
      </div>
      {/* menu */}
      <div className="h-[20px] shrink-0 flex items-center pl-[4px] text-[11px] text-[#222]">
        <WinIcon />
        <span className="ml-[12px]">Файл</span>
      </div>
      <div className="relative shrink-0">
        <Toolbar1 />
        <div className="absolute left-[1092px] top-[11px] w-[42px] h-[13px] border border-[#888] bg-white">
          <div className="w-[14px] h-full bg-[#3fdc4a]" />
        </div>
      </div>
      <Toolbar2 />
      {/* navigator + chart */}
      <div className="h-[420px] shrink-0 flex">
        <Navigator />
        <div className="relative flex-1">
          <Chart />
          <TradePanel />
        </div>
      </div>
      {/* toolbox */}
      <div className="h-[415px] shrink-0 flex">
        <div className="w-[15px] shrink-0 flex flex-col">
          <div className="h-[18px] flex justify-center pt-[4px] text-[12px] leading-none font-bold text-[#222]">×</div>
          <div className="flex-1 ml-[2px] w-[12px] bg-[#b5cfe6] flex flex-col justify-end">
            <span className="[writing-mode:vertical-rl] rotate-180 text-[10.5px] leading-[12px] text-[#222] pb-[1px]">Инструменты</span>
          </div>
        </div>
        <div className="flex-1 min-w-0 flex flex-col pt-[4px]">
          <div className="flex">
            <div className="w-[1103px] shrink-0">
              <TradeTable />
              <div className="h-[20px] bg-[#c0c0c0] relative flex items-center text-[11.5px] font-bold text-[#111] whitespace-nowrap">
                <svg width="13" height="13" className="ml-[3px] shrink-0">
                  <circle cx="6.5" cy="6.5" r="5.5" fill="none" stroke="#222" strokeWidth="1.3" />
                  <path d="M3.5 6.5h6M6.5 3.5v6" stroke="#222" strokeWidth="1.3" />
                </svg>
                <span className="ml-[6px] flex gap-[6px]">
                  <span>Прибыль: 523.20</span>
                  <span>Кредит: 0.00</span>
                  <span>Депозит: 2 000.00</span>
                  <span>Снятие: 0.00</span>
                  <span>Баланс: 2 523.20</span>
                </span>
                <span className="ml-auto">-1 439.30</span>
                <span className="ml-[50px] mr-[94px]">1 962.50</span>
              </div>
            </div>
            <div className="w-[17px] shrink-0 ml-[1px] flex flex-col bg-[#f0f0f0]">
              <div className="h-[24px] flex items-center justify-center">
                <svg width="9" height="6"><path d="M1 5l3.5-3.5L8 5" fill="none" stroke="#555" strokeWidth="1.5" /></svg>
              </div>
              <div className="flex-1" />
              <div className="h-[16px] bg-[#cdcdcd]" />
              <div className="h-[14px] flex items-center justify-center">
                <svg width="9" height="6"><path d="M1 1l3.5 3.5L8 1" fill="none" stroke="#555" strokeWidth="1.5" /></svg>
              </div>
            </div>
          </div>
          <BottomTabs />
        </div>
      </div>
      {/* status bar, cut off by the window edge */}
      <div className="h-[13px] shrink-0 border-t border-[#b0b0b0] mt-[2px] overflow-hidden flex text-[11px] leading-none text-[#222] pt-[7px] whitespace-nowrap">
        <span className="w-[447px] pl-[3px]">Для вызова справки нажмите F1</span>
        <span className="w-[128px] border-l border-[#a0a0a0] pl-[6px] -mt-[7px] pt-[7px]">Default</span>
        <span className="w-[98px] border-l border-[#a0a0a0] -mt-[7px]" />
        <span className="w-[71px] border-l border-[#a0a0a0] -mt-[7px]" />
        <span className="w-[72px] border-l border-[#a0a0a0] -mt-[7px]" />
        <span className="w-[67px] border-l border-[#a0a0a0] -mt-[7px]" />
        <span className="w-[70px] border-l border-[#a0a0a0] -mt-[7px]" />
        <span className="w-[66px] border-l border-[#a0a0a0] -mt-[7px]" />
        <span className="border-l border-[#a0a0a0] pl-[16px] -mt-[7px] pt-[7px]">904 / 1 Kb</span>
      </div>
      {/* activation watermark */}
      <div className="absolute left-[840px] top-[852px] pointer-events-none whitespace-nowrap text-[#7c7c7c]/50">
        <div className="text-[18.7px] leading-[26px]">Активация Windows</div>
        <div className="text-[14px] leading-[19px]">Чтобы активировать Windows, перейдите в</div>
        <div className="text-[14px] leading-[20px]">раздел "Параметры".</div>
      </div>
    </div>
  );
}
